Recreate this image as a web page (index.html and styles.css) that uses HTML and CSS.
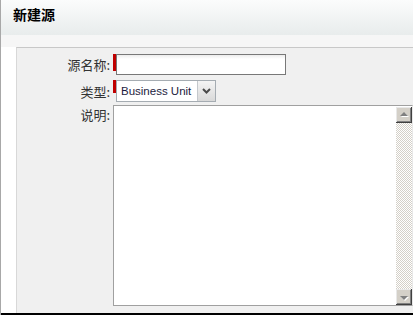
FILE: index.html
```html
<!doctype html>
<html lang="zh-CN">
<head>
  <meta charset="UTF-8" />
  <meta name="viewport" content="width=device-width,initial-scale=1" />
  <title>新建源</title>
  <link rel="stylesheet" href="styles.css">
</head>
<body>
  <div class="head"><h1>新建源</h1></div>

  <div class="wrap">
    <div class="panel">
      <div class="row r1">
        <label class="lbl">源名称:</label>
        <span class="req"></span>
        <input class="txt" type="text" />
      </div>

      <div class="row r2">
        <label class="lbl">类型:</label>
        <span class="req short"></span>
        <div class="combo">
          <span class="val">Business Unit</span>
          <span class="drop">
            <svg width="9" height="6" viewBox="0 0 9 6"><path d="M1 1 L4.5 4.5 L8 1" fill="none" stroke="#4a4a4a" stroke-width="2"/></svg>
          </span>
        </div>
      </div>

      <div class="row r3">
        <label class="lbl">说明:</label>
        <div class="memo">
          <textarea class="area"></textarea>
          <div class="vbar">
            <span class="sb">
              <svg width="14" height="14" viewBox="0 0 14 14"><path d="M4 9 L8 5 L12 9 Z" fill="#fff"/><path d="M3 8 L7 4 L11 8 Z" fill="#808080"/></svg>
            </span>
            <span class="track"></span>
            <span class="sb">
              <svg width="14" height="14" viewBox="0 0 14 14"><path d="M4 7 L8 11 L12 7 Z" fill="#fff"/><path d="M3 6 L7 10 L11 6 Z" fill="#808080"/></svg>
            </span>
          </div>
        </div>
      </div>
    </div>
    <div class="foot"></div>
  </div>
</body>
</html>
```

FILE: styles.css
```css
*{ box-sizing:border-box; }
body{
  margin:0; width:413px; height:315px; overflow:hidden;
  border-left:1px solid #a8a8a8;
  background:#fff;
  font-family: "Noto Sans CJK SC", "Liberation Sans", sans-serif;
}
.head{
  height:35px;
  background: linear-gradient(#fbfcfc, #e8ecec);
  padding:6px 0 0 12px;
}
.head h1{ margin:0; font-size:14px; line-height:16px; font-weight:700; color:#000; }

.wrap{
  height:280px;
  display:flex; flex-direction:column;
  padding-left:15px;
  background: linear-gradient(#f6f6f6 0 12px, #fff 12px);
  padding-top:12px;
}
.panel{
  flex:1;
  background:#f0f0f0;
  border-top:1px solid #c8c8c8;
  border-left:1px solid #d8d8d8;
  padding-top:6px;
}
.foot{ height:2px; background:#000; margin-left:-15px; }

.row{ display:flex; align-items:center; }
.r1{ height:21px; }
.r2{ height:22px; margin-top:5px; }
.r3{ align-items:flex-start; margin-top:3px; }

.lbl{
  width:96px; padding-right:3px;
  text-align:right;
  font-size:13px; line-height:17px; color:#333;
}
.r3 .lbl{ padding-top:1px; }

.req{ width:3px; height:17px; background:#c00000; align-self:flex-start; }
.req.short{ height:13px; }

.txt{
  width:170px; height:21px; margin:0;
  border:1px solid #787878;
  background: linear-gradient(#ececec, #fff 4px);
  padding:0 3px; font-size:12px;
}

.combo{
  width:100px; height:22px;
  display:flex; align-items:stretch;
  border:1px solid #a5acb2;
  background:#fff;
}
.val{
  flex:1; padding-left:4px;
  font-family:"Liberation Sans", sans-serif; font-size:11.5px; line-height:20px;
  color:#1c1c40;
}
.drop{
  width:18px;
  display:grid; place-items:center;
  background: linear-gradient(#f4f4f4, #d9d9d9);
  border-left:1px solid #c4c8cc;
}

.memo{
  width:300px; height:201px;
  display:flex;
  border:1px solid #a0a0a0;
  border-right-color:#e8e8e8;
  background:#fff;
}
.area{
  flex:1; margin:0; border:0; resize:none; outline:none;
  background:#fff; font-size:12px;
}
.vbar{
  width:16px;
  display:flex; flex-direction:column;
  padding-top:1px;
}
.sb{
  width:16px; height:16px;
  display:grid; place-items:center;
  background:#d4d0c8;
  box-shadow: inset -1px -1px #404040, inset 1px 1px #e8e8e8, inset -2px -2px #808080;
}
.track{
  flex:1;
  background: repeating-conic-gradient(#d4d0c8 0 25%, #fff 0 50%) 0 0/2px 2px;
}
```
